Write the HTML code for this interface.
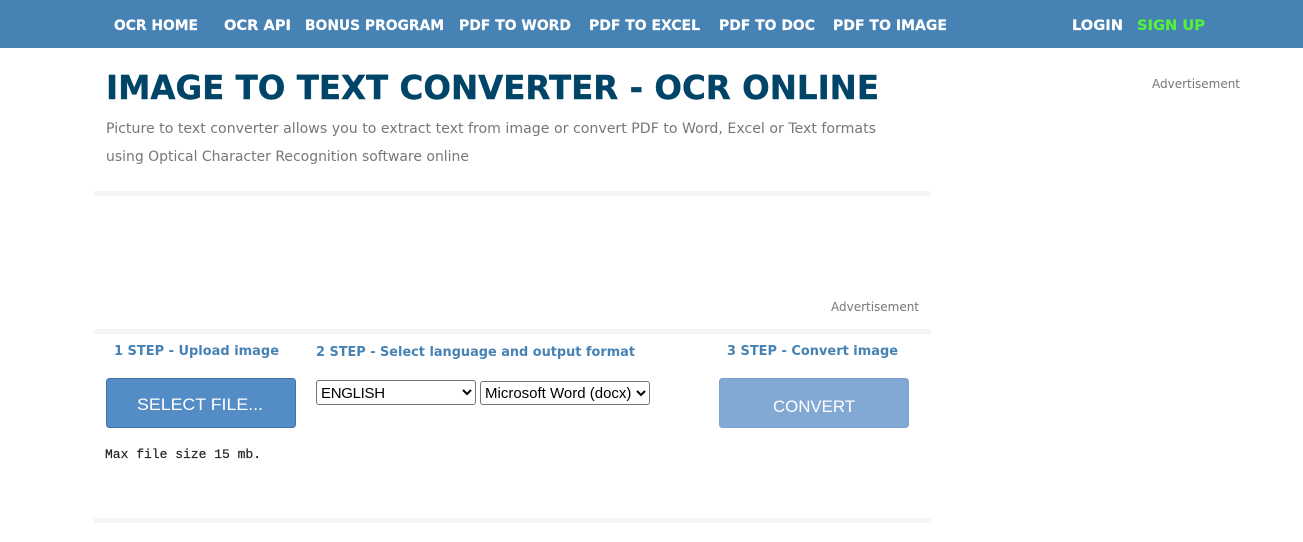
<!DOCTYPE html>
<html lang="en"><head><meta charset="utf-8"><title>Image to Text Converter - OCR Online</title>
<style>
html,body{margin:0;padding:0;background:#fff;width:1303px;height:542px;overflow:hidden}
svg{position:absolute;left:0;top:0}
text{white-space:pre}
.n{font:bold 14px "DejaVu Sans",sans-serif;fill:#fff;stroke:#fff;stroke-width:.2}
.s{font:bold 13px "DejaVu Sans",sans-serif;fill:#4682b4}
.p{font:14px "DejaVu Sans",sans-serif;fill:#777}
.a{font:12px "DejaVu Sans",sans-serif;fill:#777}
.b{font:17px "Liberation Sans",sans-serif;fill:#fff}
select{position:absolute;box-sizing:border-box;height:25px;font:15px "Liberation Sans",sans-serif;background:#fff;color:#000;border:1px solid #767676;border-radius:3px;padding:2px 0 0 0;margin:0}
</style></head><body>
<svg width="1303" height="542" viewBox="0 0 1303 542">
<rect x="0" y="0" width="1303" height="48" fill="#4682b4"/>
<text class="n" x="114" y="30" textLength="84" lengthAdjust="spacingAndGlyphs">OCR HOME</text>
<text class="n" x="224" y="30" textLength="67" lengthAdjust="spacingAndGlyphs">OCR API</text>
<text class="n" x="305" y="30" textLength="139" lengthAdjust="spacingAndGlyphs">BONUS PROGRAM</text>
<text class="n" x="459" y="30" textLength="112" lengthAdjust="spacingAndGlyphs">PDF TO WORD</text>
<text class="n" x="589" y="30" textLength="111" lengthAdjust="spacingAndGlyphs">PDF TO EXCEL</text>
<text class="n" x="719" y="30" textLength="96" lengthAdjust="spacingAndGlyphs">PDF TO DOC</text>
<text class="n" x="833" y="30" textLength="114" lengthAdjust="spacingAndGlyphs">PDF TO IMAGE</text>
<text class="n" x="1072" y="30" textLength="51" lengthAdjust="spacingAndGlyphs">LOGIN</text>
<text class="n" x="1137" y="30" textLength="68" lengthAdjust="spacingAndGlyphs" style="fill:#55f23c;stroke:#55f23c">SIGN UP</text>
<text x="106" y="99" textLength="773" lengthAdjust="spacingAndGlyphs" style="font:bold 33px 'DejaVu Sans',sans-serif;fill:#004568;stroke:#004568;stroke-width:.4">IMAGE TO TEXT CONVERTER - OCR ONLINE</text>
<text class="p" x="106" y="133" textLength="770" lengthAdjust="spacingAndGlyphs">Picture to text converter allows you to extract text from image or convert PDF to Word, Excel or Text formats</text>
<text class="p" x="106" y="161" textLength="363" lengthAdjust="spacingAndGlyphs">using Optical Character Recognition software online</text>
<text class="a" x="1152" y="88" textLength="88" lengthAdjust="spacingAndGlyphs">Advertisement</text>
<rect x="94" y="191" width="837" height="5" fill="#f5f5f5"/>
<text class="a" x="831" y="311" textLength="88" lengthAdjust="spacingAndGlyphs">Advertisement</text>
<rect x="94" y="329" width="837" height="5" fill="#f5f5f5"/>
<text class="s" x="114" y="355" textLength="165" lengthAdjust="spacingAndGlyphs">1 STEP - Upload image</text>
<text class="s" x="316" y="356" textLength="319" lengthAdjust="spacingAndGlyphs">2 STEP - Select language and output format</text>
<text class="s" x="727" y="355" textLength="171" lengthAdjust="spacingAndGlyphs">3 STEP - Convert image</text>
<rect x="106.5" y="378.5" width="189" height="49" rx="3" fill="#548dc6" stroke="#3f72a8"/>
<text class="b" x="137" y="410" textLength="126" lengthAdjust="spacingAndGlyphs">SELECT FILE...</text>
<rect x="719.5" y="378.5" width="189" height="49" rx="3" fill="#82a9d3" stroke="#7ba3cf"/>
<text class="b" x="773" y="412" textLength="82" lengthAdjust="spacingAndGlyphs">CONVERT</text>
<text x="105" y="458" style="font:13px 'Liberation Mono',monospace;fill:#222;stroke:#222;stroke-width:.2">Max file size 15 mb.</text>
<rect x="94" y="518" width="837" height="5" fill="#f5f5f5"/>
</svg>
<select style="left:316px;top:380px;width:160px;letter-spacing:-.3px"><option>ENGLISH</option></select>
<select style="left:480px;top:381px;width:170px;height:24px;padding-top:1px"><option>Microsoft Word (docx)</option></select>
</body></html>
